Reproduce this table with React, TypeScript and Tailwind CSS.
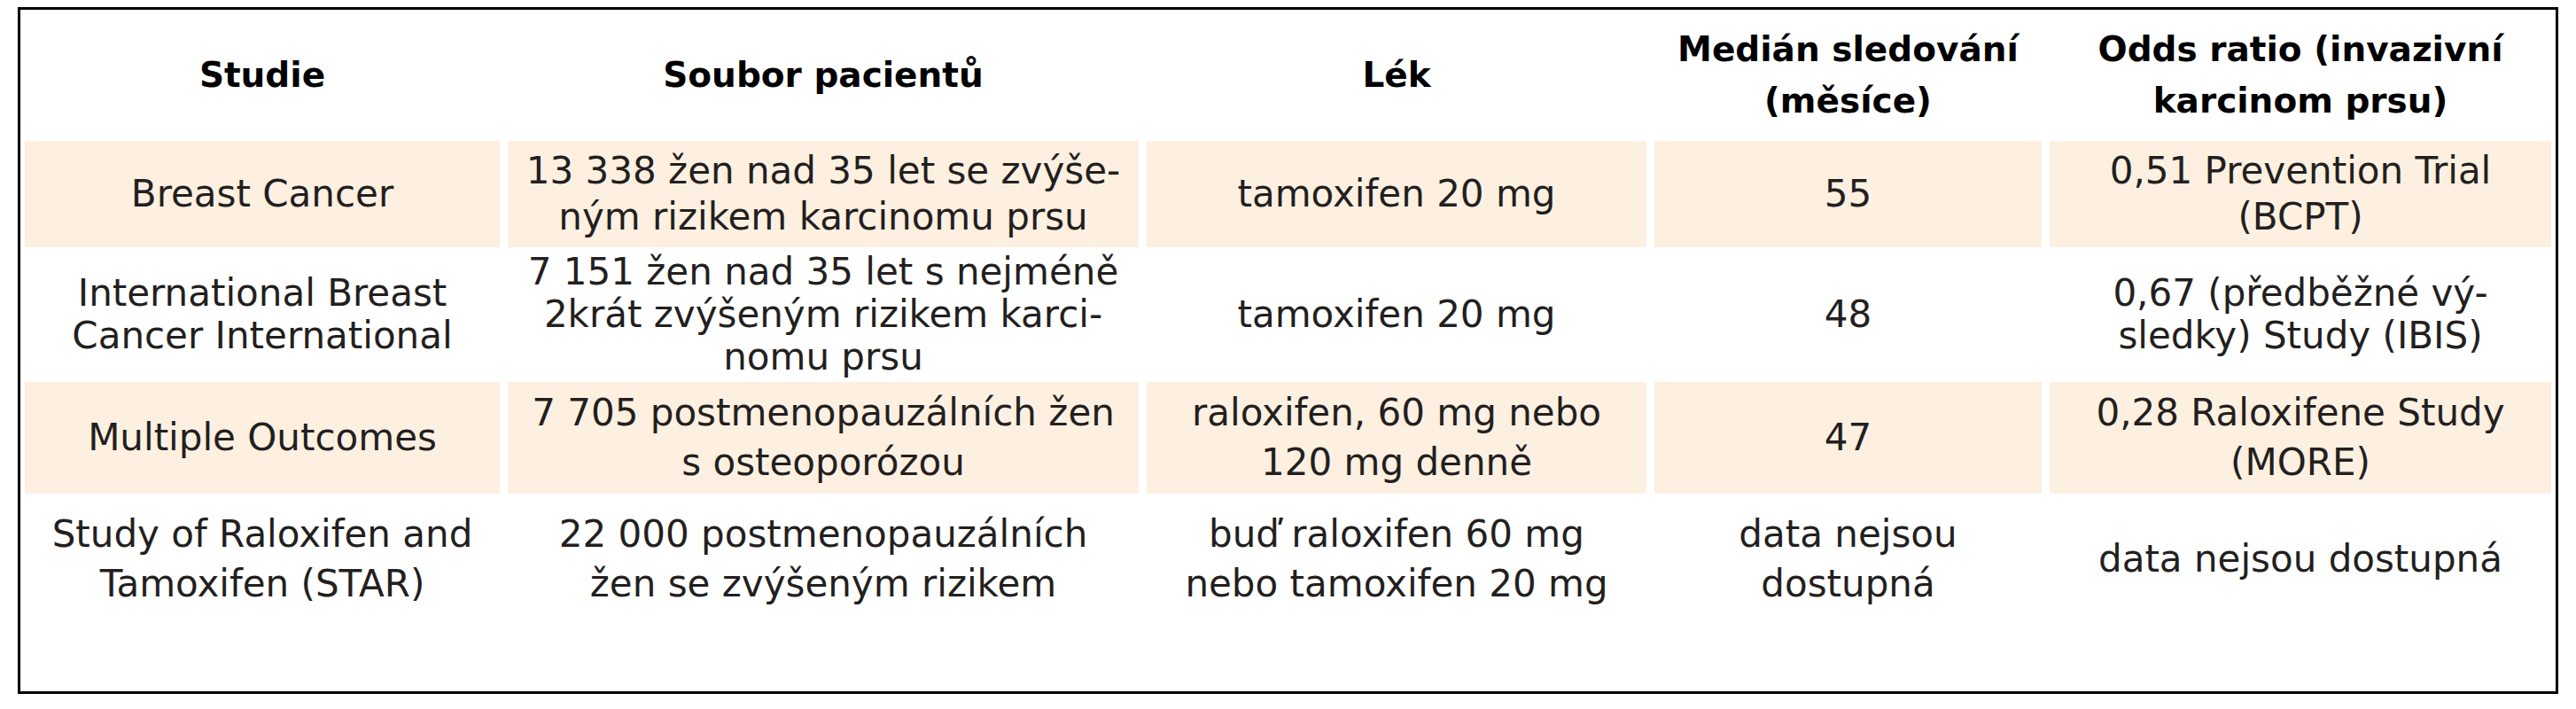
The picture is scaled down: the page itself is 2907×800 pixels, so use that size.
import React from 'react';

type Row = { shaded: boolean; height: string; leading: string; cells: string[][] };

const HEADERS: string[][] = [
  ['Studie'],
  ['Soubor pacientů'],
  ['Lék'],
  ['Medián sledování', '(měsíce)'],
  ['Odds ratio (invazivní', 'karcinom prsu)'],
];

const ROWS: Row[] = [
  {
    shaded: true,
    height: 'h-[120px]',
    leading: 'leading-[52px]',
    cells: [
      ['Breast Cancer'],
      ['13 338 žen nad 35 let se zvýše-', 'ným rizikem karcinomu prsu'],
      ['tamoxifen 20 mg'],
      ['55'],
      ['0,51 Prevention Trial', '(BCPT)'],
    ],
  },
  {
    shaded: false,
    height: 'h-[144px]',
    leading: 'leading-[48px]',
    cells: [
      ['International Breast', 'Cancer International'],
      ['7 151 žen nad 35 let s nejméně', '2krát zvýšeným rizikem karci-', 'nomu prsu'],
      ['tamoxifen 20 mg'],
      ['48'],
      ['0,67 (předběžné vý-', 'sledky) Study (IBIS)'],
    ],
  },
  {
    shaded: true,
    height: 'h-[126px]',
    leading: 'leading-[56px]',
    cells: [
      ['Multiple Outcomes'],
      ['7 705 postmenopauzálních žen', 's osteoporózou'],
      ['raloxifen, 60 mg nebo', '120 mg denně'],
      ['47'],
      ['0,28 Raloxifene Study', '(MORE)'],
    ],
  },
  {
    shaded: false,
    height: 'h-[139px]',
    leading: 'leading-[56px]',
    cells: [
      ['Study of Raloxifen and', 'Tamoxifen (STAR)'],
      ['22 000 postmenopauzálních', 'žen se zvýšeným rizikem'],
      ['buď raloxifen 60 mg', 'nebo tamoxifen 20 mg'],
      ['data nejsou', 'dostupná'],
      ['data nejsou dostupná'],
    ],
  },
];

const Lines = ({ lines }: { lines: string[] }) => (
  <>
    {lines.map((l) => (
      <span key={l} className="block whitespace-nowrap">
        {l}
      </span>
    ))}
  </>
);

export default function App() {
  return (
    <div className="min-h-screen bg-white pl-[20px] pt-[8px]" style={{ width: 2907 }}>
      <div
        className="w-[2867px] h-[775px] border-[3px] border-black bg-white px-[5px] text-[#231f1e]"
        style={{ fontFamily: '"DejaVu Sans", "Open Sans", sans-serif' }}
      >
        <div className="grid grid-cols-[536px_712px_564px_437px_1fr] gap-x-[9px] gap-y-[4px]">
          {HEADERS.map((h, i) => (
            <div
              key={i}
              className="flex h-[144px] flex-col items-center justify-center pt-[4px] text-center text-[39px] font-bold leading-[58px] text-black"
            >
              <Lines lines={h} />
            </div>
          ))}
          {ROWS.map((row, r) =>
            row.cells.map((c, i) => (
              <div
                key={`${r}-${i}`}
                className={`flex ${row.height} flex-col items-center justify-center text-center text-[42px] ${row.leading} ${
                  row.shaded ? 'bg-[#fdf0e1]' : 'bg-white'
                }`}
              >
                <Lines lines={c} />
              </div>
            )),
          )}
        </div>
      </div>
    </div>
  );
}
